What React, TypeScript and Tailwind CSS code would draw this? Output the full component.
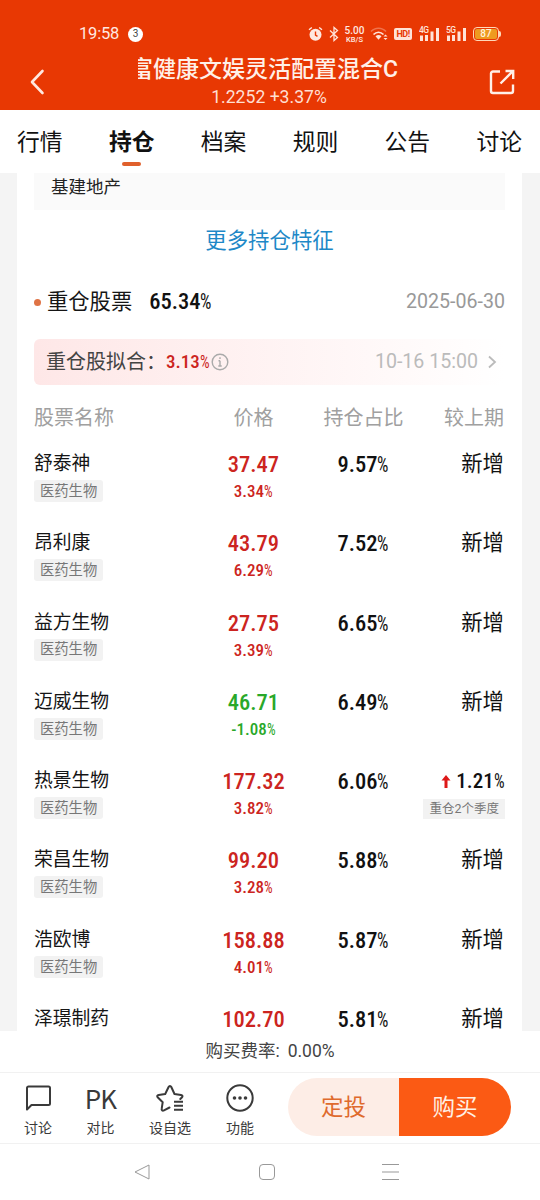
import clsx from "clsx"

type Stock = {
  name: string
  price: string
  change?: string
  ratio: string
  diff?: string
  note?: string
}

const tabs = ["行情", "持仓", "档案", "规则", "公告", "讨论"]

const stocks: Stock[] = [
  { name: "舒泰神", price: "37.47", change: "3.34%", ratio: "9.57%" },
  { name: "昂利康", price: "43.79", change: "6.29%", ratio: "7.52%" },
  { name: "益方生物", price: "27.75", change: "3.39%", ratio: "6.65%" },
  { name: "迈威生物", price: "46.71", change: "-1.08%", ratio: "6.49%" },
  { name: "热景生物", price: "177.32", change: "3.82%", ratio: "6.06%", diff: "1.21%", note: "重仓2个季度" },
  { name: "荣昌生物", price: "99.20", change: "3.28%", ratio: "5.88%" },
  { name: "浩欧博", price: "158.88", change: "4.01%", ratio: "5.87%" },
  { name: "泽璟制药", price: "102.70", ratio: "5.81%" },
]

// condensed number, the percent sign is thinner and narrower than the digits
function Num({ value, className }: { value: string; className?: string }) {
  const percent = value.endsWith("%")
  const digits = percent ? value.slice(0, -1) : value
  return (
    <span className={clsx("inline-flex whitespace-nowrap font-medium [font-stretch:85%]", className)}>
      <span>{digits}</span>
      {percent && (
        <span className="w-[0.54em]">
          <span className="inline-block origin-left scale-x-[0.8] font-normal">%</span>
        </span>
      )}
    </span>
  )
}

function Signal({ label }: { label: string }) {
  return (
    <svg width="21" height="16" viewBox="0 0 21 16" fill="#ffe3d8">
      <text x="0" y="7" fontSize="8.5" fontWeight="500" fontFamily="Roboto" letterSpacing="-0.5">{label}</text>
      <rect x="1" y="9.5" width="3" height="5.5" />
      <rect x="6" y="9" width="3" height="6" />
      <rect x="11.5" y="5.5" width="3" height="9.5" />
      <rect x="17" y="2" width="3" height="13" />
    </svg>
  )
}

function StatusBar() {
  return (
    <div className="flex h-[52px] items-end pb-2 pl-[79px] pr-[39px] text-[#ffe9e1]">
      <div className="flex h-5 items-center">
        <span className="w-10 text-[16.5px] leading-5 tracking-[-0.2px]">19:58</span>
        <span className="ml-[9px] flex size-[15px] items-center justify-center rounded-full bg-white text-[10px] leading-none text-[#444]">3</span>
      </div>
      <div className="ml-auto flex h-5 items-center">
        <svg width="15" height="16" viewBox="0 0 15 16">
          <circle cx="7.5" cy="8.7" r="6" fill="#ffe9e1" />
          <path d="M1 3.8 3.8 1.5M14 3.8 11.2 1.5" stroke="#ffe9e1" strokeWidth="1.4" />
          <path d="M7.5 5.5V9l2 1.3" stroke="#e83803" strokeWidth="1.4" fill="none" />
        </svg>
        <svg className="ml-[6px]" width="10" height="16" viewBox="0 0 10 16" fill="none" stroke="#ffe3d8" strokeWidth="1.3">
          <path d="M1 4.5 8.5 11.5 5 14.5V1.5L8.5 4.5 1 11.5" />
        </svg>
        <div className="ml-[4px] flex w-[23px] flex-col items-center">
          <span className="text-[10px] font-medium leading-[10px]">5.00</span>
          <span className="text-[7.5px] font-medium leading-[7px]">KB/S</span>
        </div>
        <svg className="ml-[4px]" width="19" height="16" viewBox="0 0 19 16" fill="none" stroke="#ffe3d8">
          <path d="M1 5.5C5 1 12 1 16 5.5" strokeWidth="1.5" opacity="0.35" />
          <path d="M3.5 8.5c3-3 7-3 10 0" strokeWidth="1.7" />
          <path d="M5.5 10.2c2-1.6 4-1.6 6 0L8.5 13.8z" fill="#ffe3d8" stroke="none" />
          <path d="m13.5 10.5 2-2 2 2zM13.5 12l2 2 2-2z" fill="#ffe3d8" stroke="none" />
        </svg>
        <span className="ml-[5px] flex h-3 w-[18px] items-center justify-center rounded-[2px] bg-[#ffe3d8] text-[9px] font-bold leading-none tracking-[-0.5px] text-[#e83803]">
          HD!
        </span>
        <span className="ml-[7px]"><Signal label="4G" /></span>
        <span className="ml-[6px]"><Signal label="5G" /></span>
        <span className="ml-[6px] flex h-[14px] w-[26px] items-center justify-center rounded-[4px] border border-[#ffd9b8] bg-[#ee9a20] bg-clip-content p-px text-[10px] font-medium leading-none text-[#fff2dc]">
          87
        </span>
        <span className="h-[6px] w-[2px] rounded-r-full bg-[#ffd9b8]" />
      </div>
    </div>
  )
}

function Header() {
  return (
    <header className="h-[110px] bg-[#e83803]">
      <StatusBar />
      <div className="flex h-[58px] items-center pt-px">
        <div className="flex w-[138px] pl-[29px]">
          <svg width="16" height="26" viewBox="0 0 16 26" fill="none" stroke="#ffe9e1" strokeWidth="2.6" strokeLinecap="round" strokeLinejoin="round">
            <path d="M13.5 2 3 13l10.5 11" />
          </svg>
        </div>
        <div className="flex w-[262px] flex-col items-center text-[#fff0e8]">
          <div className="flex w-full justify-end overflow-hidden pr-[2px]">
            <h1 className="whitespace-nowrap text-[23px] font-medium leading-[30px]">富健康文娱灵活配置混合C</h1>
          </div>
          <p className="text-[17.6px] leading-6 text-[#ffdfd2]">1.2252 +3.37%</p>
        </div>
        <svg className="ml-[88px]" width="28" height="28" viewBox="0 0 28 28" fill="none" stroke="#fff0e8" strokeWidth="2.4">
          <path d="M12 3.5H5a2 2 0 0 0-2 2V23a2 2 0 0 0 2 2h18a2 2 0 0 0 2-2v-6.5" />
          <path d="M12.5 15.5 25 3M17.5 3H25.2v8" />
        </svg>
      </div>
    </header>
  )
}

function Tabs() {
  return (
    <nav className="flex h-[63px] justify-between pl-[17px] pr-[18px] pt-4">
      {tabs.map((tab) => {
        const active = tab === "持仓"
        return (
          <div key={tab} className="flex flex-col items-center">
            <span className={clsx("text-[22.8px] leading-[34px] text-[#111]", active && "font-bold")}>{tab}</span>
            {active && <span className="mt-[2px] h-1 w-[19px] rounded-full bg-[#e0602c]" />}
          </div>
        )
      })}
    </nav>
  )
}

function StockRow({ stock }: { stock: Stock }) {
  const down = stock.change?.startsWith("-")
  return (
    <div className="flex h-[79.3px] shrink-0 items-start">
      <div className="w-[169px]">
        <div className="text-[18.8px] leading-7 text-[#151515]">{stock.name}</div>
        {stock.change && (
          <span className="mt-[2px] inline-flex h-[22px] items-center rounded-[3px] bg-[#f2f2f2] px-[6px] text-[14.3px] leading-none text-[#777]">
            医药生物
          </span>
        )}
      </div>
      <div className={clsx("flex w-[101px] flex-col items-center", down ? "text-[#29a829]" : "text-[#cc2420]")}>
        <Num value={stock.price} className="text-[22.5px] leading-7" />
        {stock.change && <Num value={stock.change} className="text-[17px] leading-[26px]" />}
      </div>
      <div className="flex w-[119px] justify-center">
        <Num value={stock.ratio} className="text-[22.5px] leading-7" />
      </div>
      <div className="flex flex-1 flex-col items-end">
        {stock.diff ? (
          <>
            <div className="flex items-center gap-[5px]">
              <svg width="10" height="13" viewBox="0 0 10 13">
                <path d="M5 0 9.5 5.5H6.5V13H3.5V5.5H.5z" fill="#dd1818" />
              </svg>
              <Num value={stock.diff} className="text-[21px] leading-7" />
            </div>
            <span className="mt-1 flex h-5 items-center whitespace-nowrap bg-[#f2f2f2] px-[6px] text-[12.5px] leading-none text-[#777]">
              {stock.note}
            </span>
          </>
        ) : (
          <span className="pr-px text-[21.4px] leading-7">新增</span>
        )}
      </div>
    </div>
  )
}

function Holdings() {
  return (
    <main className="h-[858px] overflow-hidden bg-[#f4f4f4] pl-[17px] pr-[18px]">
      <div className="flex h-full flex-col bg-white px-[17px]">
        <div className="h-[37px] shrink-0 bg-[#fafafa] pl-[17px] text-[17.5px] leading-[28px] text-[#222]">基建地产</div>
        <div className="mt-[16px] text-center text-[21.4px] leading-[30px] text-[#1e88c7]">更多持仓特征</div>
        <div className="mt-[30px] flex h-[32px] shrink-0 items-center">
          <span className="size-[7px] rounded-full bg-[#df7345]" />
          <span className="ml-[6px] text-[21.3px] text-[#151515]">重仓股票</span>
          <Num value="65.34%" className="ml-[17px] text-[22.5px]" />
          <span className="ml-auto text-[19.6px] text-[#999]">2025-06-30</span>
        </div>
        <div className="mt-[21px] flex h-[46px] shrink-0 items-center rounded-md bg-linear-to-r from-[#fee7e7] to-white pl-[12px] pr-[7px]">
          <span className="text-[20px] text-[#444]">重仓股拟合：</span>
          <Num value="3.13%" className="text-[19px] text-[#cc2420]" />
          <svg className="ml-[1px]" width="18" height="18" viewBox="0 0 18 18" fill="none" stroke="#aaa" strokeWidth="1.4">
            <circle cx="9" cy="9" r="7.8" />
            <path d="M9 7.8V13M7.5 7.8H9M7.3 13h3.4M9 4.3v1.6" />
          </svg>
          <span className="ml-auto text-[19.6px] text-[#bbb]">10-16 15:00</span>
          <svg className="ml-[9px]" width="11" height="16" viewBox="0 0 11 16" fill="none" stroke="#bbb" strokeWidth="1.8">
            <path d="m2 2.5 6 5.500-6 5.500" />
          </svg>
        </div>
        <div className="mb-[18px] mt-[18px] flex h-[29px] shrink-0 items-center text-[20px] text-[#a0a0a0]">
          <span className="w-[169px]">股票名称</span>
          <span className="w-[101px] text-center">价格</span>
          <span className="w-[119px] text-center">持仓占比</span>
          <span className="flex-1 pr-px text-right">较上期</span>
        </div>
        {stocks.map((stock) => (
          <StockRow key={stock.name} stock={stock} />
        ))}
      </div>
    </main>
  )
}

function BottomBar() {
  return (
    <div className="flex h-[72px] border-y border-[#f1f1f1] pl-[3px] text-[#3a3a3a]">
      <div className="flex w-[70px] flex-col items-center pt-[11px]">
        <svg width="28" height="28" viewBox="0 0 28 28" fill="none" stroke="currentColor" strokeWidth="2" strokeLinejoin="round">
          <path d="M4.5 2.5h20a1.5 1.5 0 0 1 1.5 1.5v15.5a1.5 1.5 0 0 1-1.5 1.5H7.5L3 25.5V4a1.5 1.5 0 0 1 1.5-1.5z" />
        </svg>
        <span className="mt-[6px] text-[14px] leading-5">讨论</span>
      </div>
      <div className="flex w-[55px] flex-col items-center pt-[11px]">
        <span className="font-['Noto_Sans_CJK_SC'] text-[26px] leading-7 tracking-[-1px]">PK</span>
        <span className="mt-[6px] text-[14px] leading-5">对比</span>
      </div>
      <div className="flex w-[84px] flex-col items-center pt-[11px]">
        <svg width="28" height="28" viewBox="0 0 28 28" fill="none" stroke="currentColor" strokeWidth="2" strokeLinejoin="round" strokeLinecap="round">
          <path d="M13.5 23.5 8 26.3c-1.500.8-2.600 0-2.300-1.600l1-6.500-4.800-4.700c-1.200-1.200-.7-2.300.8-2.500l6.500-1L12.600 3c.7-1.400 2-1.400 2.700 0l3.200 7 6.500 1c1.500.2 2 1.300.8 2.500l-1.500 1.500" />
          <path d="M18 17.8h9M18 21.8h9M18 25.8h9" strokeLinecap="butt" />
        </svg>
        <span className="mt-[6px] text-[14px] leading-5">设自选</span>
      </div>
      <div className="flex w-[56px] flex-col items-center pt-[11px]">
        <svg width="28" height="28" viewBox="0 0 28 28" fill="currentColor">
          <circle cx="14" cy="14" r="12.7" fill="none" stroke="currentColor" strokeWidth="2" />
          <circle cx="8.5" cy="14" r="1.8" />
          <circle cx="14" cy="14" r="1.8" />
          <circle cx="19.5" cy="14" r="1.8" />
        </svg>
        <span className="mt-[6px] text-[14px] leading-5">功能</span>
      </div>
      <div className="ml-[20px] mt-[5px] flex h-[58px] w-[223px] overflow-hidden rounded-full text-[22.5px]">
        <button className="w-[111px] bg-[#fdede6] pt-[2px] text-[#df6a2d]">定投</button>
        <button className="w-[112px] bg-[#fb5a14] pt-[2px] text-[#fff0e4]">购买</button>
      </div>
    </div>
  )
}

export default function App() {
  return (
    <div className="h-[1200px] w-[540px] overflow-hidden bg-white font-[Roboto,'Noto_Sans_CJK_SC',sans-serif] text-[#111]">
      <Header />
      <Tabs />
      <Holdings />
      <div className="flex h-[41px] items-center justify-center text-[17.5px] text-[#444]">
        <span>购买费率:</span>
        <span className="ml-2">0.00%</span>
      </div>
      <BottomBar />
      <div className="flex h-[56px] items-center justify-between pl-[134px] pr-[141px]">
        <svg width="16" height="16" viewBox="0 0 16 16" fill="none" stroke="#999" strokeLinejoin="round">
          <path d="M1 8 15 1v14z" />
        </svg>
        <span className="ml-[1px] size-4 rounded-[4px] border border-[#999]" />
        <svg width="17" height="16" viewBox="0 0 17 16" stroke="#999">
          <path d="M0 .5h17M0 8h17M0 15.5h17" />
        </svg>
      </div>
    </div>
  )
}
